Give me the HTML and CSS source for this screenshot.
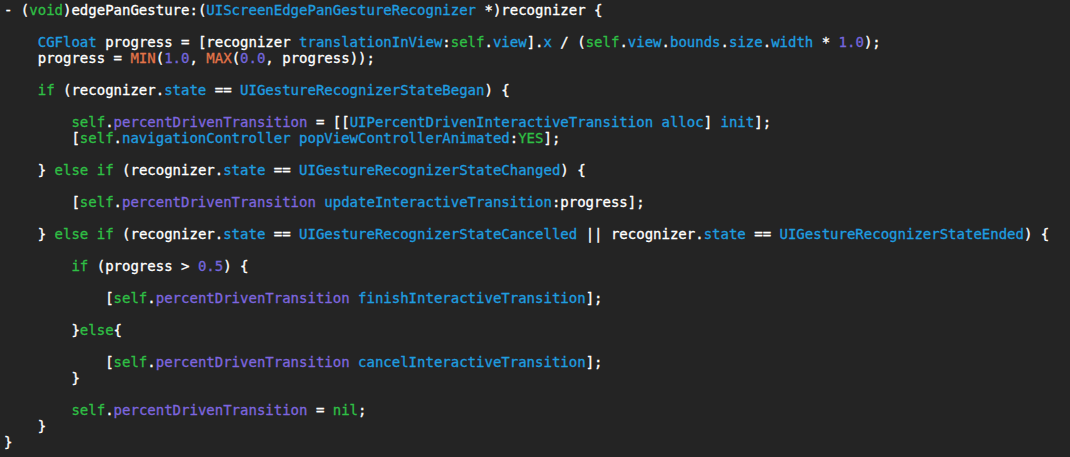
FILE: index.html
```html
<!DOCTYPE html>
<html>
<head>
<meta charset="utf-8">
<title>edgePanGesture</title>
<link rel="stylesheet" href="styles.css">
</head>
<body>
<pre class="code">- (<span class="k">void</span>)edgePanGesture:(<span class="t">UIScreenEdgePanGestureRecognizer</span> *)recognizer {

    <span class="t">CGFloat</span> progress = [recognizer <span class="m">translationInView</span>:<span class="k">self</span>.<span class="m">view</span>].<span class="m">x</span> / (<span class="k">self</span>.<span class="m">view</span>.<span class="m">bounds</span>.<span class="m">size</span>.<span class="m">width</span> * <span class="n">1.0</span>);
    progress = <span class="mc">MIN</span>(<span class="n">1.0</span>, <span class="mc">MAX</span>(<span class="n">0.0</span>, progress));

    <span class="k">if</span> (recognizer.<span class="m">state</span> == <span class="t">UIGestureRecognizerStateBegan</span>) {

        <span class="k">self</span>.<span class="p">percentDrivenTransition</span> = [[<span class="t">UIPercentDrivenInteractiveTransition</span> <span class="m">alloc</span>] <span class="m">init</span>];
        [<span class="k">self</span>.<span class="m">navigationController</span> <span class="m">popViewControllerAnimated</span>:<span class="k">YES</span>];

    } <span class="k">else if</span> (recognizer.<span class="m">state</span> == <span class="t">UIGestureRecognizerStateChanged</span>) {

        [<span class="k">self</span>.<span class="p">percentDrivenTransition</span> <span class="m">updateInteractiveTransition</span>:progress];

    } <span class="k">else if</span> (recognizer.<span class="m">state</span> == <span class="t">UIGestureRecognizerStateCancelled</span> || recognizer.<span class="m">state</span> == <span class="t">UIGestureRecognizerStateEnded</span>) {

        <span class="k">if</span> (progress &gt; <span class="n">0.5</span>) {

            [<span class="k">self</span>.<span class="p">percentDrivenTransition</span> <span class="m">finishInteractiveTransition</span>];

        }<span class="k">else</span>{

            [<span class="k">self</span>.<span class="p">percentDrivenTransition</span> <span class="m">cancelInteractiveTransition</span>];
        }

        <span class="k">self</span>.<span class="p">percentDrivenTransition</span> = <span class="k">nil</span>;
    }
}</pre>
</body>
</html>
```

FILE: styles.css
```css
html, body {
    margin: 0;
    background: #242424;
}
.code {
    margin: 0;
    padding: 2px 0 0 4px;
    font-family: "DejaVu Sans Mono", "Liberation Mono", monospace;
    font-size: 14px;
    line-height: 16px;
    color: #ffffff;
    white-space: pre;
    -webkit-text-stroke: 0.3px currentColor;
}
.k  { color: #2fbf45; }
.t  { color: #1f9ee0; }
.m  { color: #1f9ee0; }
.p  { color: #7d66df; }
.n  { color: #7466dc; }
.mc { color: #e27449; }
```
